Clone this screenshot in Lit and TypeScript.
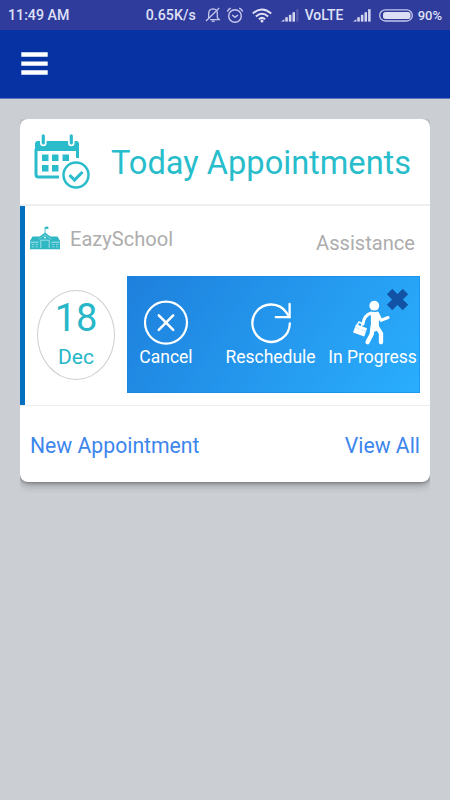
import { LitElement, html, css, svg } from "lit";
import { customElement } from "lit/decorators.js";

const menu = html`<svg width="28" height="24" viewBox="0 0 28 24" fill="#fff">
  <path d="M.3 .3h26.4v4.5H.3zM.3 9.4h26.4v4.3H.3zM.3 18.3h26.4v4.5H.3z"/></svg>`;

const bell = html`<svg width="16" height="16" viewBox="0 0 16 16" fill="none" stroke="#c4c7eb" stroke-width="1.3">
  <path d="M3.7 11.8V6.2Q3.9 2 8 1.8Q12.2 2 12.3 6.2V10.4L14.2 12.6H5.2"/><path d="M1 14L14.2 1"/><path d="M6.7 14.2h3"/></svg>`;

const alarm = html`<svg width="18" height="17" viewBox="0 0 18 17" fill="none" stroke="#c9cbed" stroke-width="1.4">
  <circle cx="9" cy="9" r="6.3"/><path d="M6.2 8L9 10.4L12 8"/><path d="M1.4 4.6Q2 2 4.8 1.1M16.6 4.6Q16 2 13.2 1.1"/></svg>`;

const wifi = html`<svg width="20" height="15" viewBox="0 0 20 15" fill="none" stroke="#dfe0f5" stroke-width="2">
  <path d="M.8 5.5Q10-2.5 19.2 5.5"/><path d="M3.9 8.4Q10 3.1 16.1 8.4"/><path d="M6.9 11.2Q10 8.5 13.1 11.2"/>
  <circle cx="10" cy="13" r="1.5" fill="#dfe0f5" stroke="none"/></svg>`;

const signal = (weak: boolean) => html`<svg width="18" height="13" viewBox="0 0 18 13" fill="#d5d7f0">
  <path d="M0 12.6L3.4 10.2V12.6Z"/>
  ${[4.4, 6.8, 9.4, 12.4].map(
    (h, i) => svg`<rect x=${4.3 + i * 3.6} y=${12.6 - h} width="2.5" height=${h} opacity=${weak && i === 3 ? 0.2 : 1}/>`
  )}</svg>`;

const battery = html`<svg width="34" height="13" viewBox="0 0 34 13">
  <rect x=".7" y=".8" width="32.6" height="11.2" rx="5.6" fill="none" stroke="#c4c6e9" stroke-width="1.3"/>
  <rect x="4" y="2.9" width="27.5" height="7.1" rx="2.5" fill="#dddff5"/></svg>`;

const calendar = html`<svg width="56" height="56" viewBox="0 0 56 56">
  <path d="M4 7H42Q45 7 45 10V17H1V10Q1 7 4 7Z" fill="#2bbccb"/>
  <path d="M2 15V40.5Q2 43 4.5 43H25M43.5 15V24" fill="none" stroke="#2bbccb" stroke-width="3"/>
  <path d="M9.3 2V9M37.3 2V9" stroke="#fff" stroke-width="6.5" stroke-linecap="round"/>
  <path d="M9.3 1.8V9M37.3 1.8V9" stroke="#2bbccb" stroke-width="3.2" stroke-linecap="round"/>
  <path d="M8 20.5h6.5v6.5h-6.5zM18 20.5h6.5v6.5h-6.5zM28.5 20.5h6.5v6.5h-6.5zM8 31h6.5v6.5h-6.5zM18 31h6.5v6.5h-6.5z" fill="#2bbccb"/>
  <circle cx="42" cy="41" r="15.2" fill="#fff"/>
  <circle cx="42" cy="41" r="12.5" fill="none" stroke="#2bbccb" stroke-width="2.5"/>
  <path d="M35.5 41L40.5 46L48.5 38" fill="none" stroke="#2bbccb" stroke-width="3.1"/></svg>`;

const school = html`<svg width="30" height="24" viewBox="0 0 30 24">
  <path d="M2.5 10.5H9.5L15 6.5L20.5 10.5H27.5L30 14.8V16.2H0V14.8Z" fill="#2fb7c4"/>
  <path d="M0 16.5H9V23H0zM21 16.5H30V23H21z" fill="#2fb7c4"/>
  <path d="M8.6 12.5L15 7.6L21.4 12.5V22.5H8.6z" fill="#2fb7c4"/>
  <path d="M.5 16H8.6M21.4 16H29.5M8.6 13.4L15 8.7L21.4 13.4" fill="none" stroke="#a4e0e6" stroke-width=".6"/>
  <path d="M10.8 22.5V14.2H19.2V22.5" fill="none" stroke="#bde9ed" stroke-width=".8"/>
  <path d="M1.6 18.5h2.4M5.4 18.5h2.4M22.2 18.5h2.4M26 18.5h2.4M1.6 20.8h2.4M5.4 20.8h2.4M22.2 20.8h2.4M26 20.8h2.4" stroke="#a4e0e6" stroke-width=".8"/>
  <circle cx="15" cy="11.6" r="1.1" fill="#bde9ed"/>
  <path d="M0 22.6H30" stroke="#2fb7c4" stroke-width="1.4"/>
  <path d="M15 7V1.2" stroke="#2fb7c4" stroke-width=".8"/>
  <path d="M15 1.2Q16.5 .2 18.4 .8V3Q16.5 2.6 15 3.2Z" fill="#2fb7c4"/></svg>`;

const cancelIcon = html`<svg width="46" height="46" viewBox="0 0 46 46" fill="none" stroke="#fff" stroke-linecap="round">
  <circle cx="23" cy="22.6" r="21" stroke-width="2.2"/><path d="M15.8 15.4L30.2 29.8M30.2 15.4L15.8 29.8" stroke-width="2.5"/></svg>`;

const reload = html`<svg width="42" height="42" viewBox="0 0 42 42" fill="none" stroke="#fff" stroke-width="2.3" stroke-linecap="round">
  <path d="M39.8 21.5A18.7 18.7 0 1 1 36.5 10.6L39.2 15"/><path d="M39.6 2V15.2H25.8"/></svg>`;

const walker = html`<svg width="38" height="46" viewBox="0 0 38 46">
  <circle cx="22.3" cy="5.7" r="4.9" fill="#fff"/>
  <g fill="none" stroke="#fff" stroke-linecap="round" stroke-linejoin="round">
    <path d="M19.5 13Q12 15 11 24" stroke-width="3"/>
    <path d="M25.3 13L29 20.3L36 17.5" stroke-width="3"/>
    <path d="M20.7 26L19.8 34L15.5 42.2" stroke-width="4.3"/>
    <path d="M24.5 26L29 33.5V42.3" stroke-width="4.3"/>
    <path d="M20.8 13.8V28.5Q23 30.5 25 28.5V13.8Z" stroke-width="3.8" fill="#fff"/>
    <path d="M5.5 24.6L6.8 22L10.3 23.5L9.5 26" stroke-width="1.4"/>
  </g>
  <path d="M4.1 24.3L15.1 28.2L12.3 36.6L1 32.4Z" fill="#fff"/>
  <path d="M3.4 27.2L7.6 29M9.2 29.6L13.8 31.2" stroke="#a3d8fb" stroke-width=".6"/></svg>`;

const closeMark = html`<svg width="21" height="21" viewBox="0 0 20 20" fill="#1253a5" stroke="#1253a5" stroke-width="1" stroke-linejoin="round">
  <path d="M5 .5L10 5.5L15 .5L19.5 5L14.5 10L19.5 15L15 19.5L10 14.5L5 19.5L.5 15L5.5 10L.5 5Z"/></svg>`;

@customElement("status-bar")
class StatusBar extends LitElement {
  static styles = css`
    :host { display: flex; height: 30px; align-items: center; padding: 0 8px; box-sizing: border-box; background: #303c9c;
      color: #dfe0f5; font: 500 14.2px/31px Roboto, sans-serif; white-space: nowrap; }
    svg { display: block; flex: none; }
    .time { width: 138px; }
    .speed { width: 59px; }
    .alarm { margin-left: 5px; }
    .wifi { margin-left: 8px; }
    .signal { margin-left: 9px; }
    .volte { margin-left: 6px; width: 48px; font-size: 13.9px; }
    .battery { margin-left: 8px; }
    .percent { margin-left: 5px; font-size: 13px; }
  `;
  render() {
    return html`<span class="time">11:49 AM</span><span class="speed">0.65K/s</span>
      <span>${bell}</span><span class="alarm">${alarm}</span><span class="wifi">${wifi}</span>
      <span class="signal">${signal(true)}</span><span class="volte">VoLTE</span><span>${signal(false)}</span>
      <span class="battery">${battery}</span><span class="percent">90%</span>`;
  }
}

@customElement("appointments-card")
class AppointmentsCard extends LitElement {
  static styles = css`
    :host { display: block; height: 374px; overflow: hidden; }
    svg { display: block; flex: none; }
    .card { height: 363px; border-radius: 8px; background: #fff; overflow: hidden; box-shadow: 0 3px 8px rgba(0, 0, 0, .3), 0 1px 3px rgba(0, 0, 0, .25); }
    header { display: flex; height: 85px; border-bottom: 2px solid #eee; }
    .calendar { padding: 15px 0 0 14px; }
    h1 { margin: 0 0 0 21px; font-weight: 400; font-size: 32.6px; line-height: 88px; color: #27bdcb; white-space: nowrap; }
    .entry { height: 199px; box-sizing: border-box; border-left: 5px solid #026fbf; }
    .place { display: flex; height: 70px; padding: 0 15px 0 5px; color: #adadad; font-size: 20.1px; }
    .school { padding-top: 20px; }
    .name { margin-left: 10px; line-height: 67px; }
    .kind { margin-left: auto; line-height: 74px; }
    .row { display: flex; align-items: center; }
    .date { width: 78px; height: 90px; margin: 0 12px; box-sizing: border-box; border: 1px solid #ccced2; border-radius: 50%;
      display: flex; flex-direction: column; align-items: center; color: #27b7c8; }
    .day { font-size: 38px; line-height: 40px; margin-top: 7.5px; }
    .month { font-size: 21px; line-height: 26px; margin-top: 5.5px; }
    .actions { position: relative; display: grid; grid-template-columns: 78px 131px 73px; width: 293px; height: 117px; box-sizing: border-box;
      background: linear-gradient(125deg, #1e80dc, #2aaefe); box-shadow: inset 0 0 0 1px rgba(8, 132, 230, .45); color: #fff; font-size: 17.5px; }
    .action { display: flex; flex-direction: column; align-items: center; min-width: 0; white-space: nowrap; }
    .pic { height: 70px; display: flex; align-items: flex-end; }
    .label { line-height: 23px; }
    .reload { padding-bottom: 2px; }
    .walk { padding-right: 3px; }
    .close { position: absolute; right: 12px; top: 13px; }
    footer { display: flex; justify-content: space-between; padding: 0 10px; height: 77px; box-sizing: border-box; border-top: 1px solid #eee;
      font-size: 21.2px; line-height: 79px; color: #3c86ee; }
  `;
  render() {
    return html`<section class="card">
      <header><div class="calendar">${calendar}</div><h1>Today Appointments</h1></header>
      <div class="entry">
        <div class="place"><span class="school">${school}</span><span class="name">EazySchool</span><span class="kind">Assistance</span></div>
        <div class="row">
          <div class="date"><span class="day">18</span><span class="month">Dec</span></div>
          <div class="actions">
            <div class="action"><div class="pic">${cancelIcon}</div><span class="label">Cancel</span></div>
            <div class="action"><div class="pic"><span class="reload">${reload}</span></div><span class="label">Reschedule</span></div>
            <div class="action"><div class="pic walk">${walker}</div><span class="label">In Progress</span></div>
            <span class="close">${closeMark}</span>
          </div>
        </div>
      </div>
      <footer><span>New Appointment</span><span>View All</span></footer>
    </section>`;
  }
}

@customElement("app-root")
class AppRoot extends LitElement {
  static styles = css`
    :host { display: block; height: 800px; background: #cbced3; font-family: Roboto, sans-serif; }
    nav { height: 69px; box-sizing: border-box; background: #0632a4; border-bottom: 1px solid #6075bc; padding: 22px 21px; }
    nav svg { display: block; }
    main { padding: 20px 20px 0; }
  `;
  render() {
    return html`<status-bar></status-bar>
      <nav>${menu}</nav>
      <main><appointments-card></appointments-card></main>`;
  }
}
